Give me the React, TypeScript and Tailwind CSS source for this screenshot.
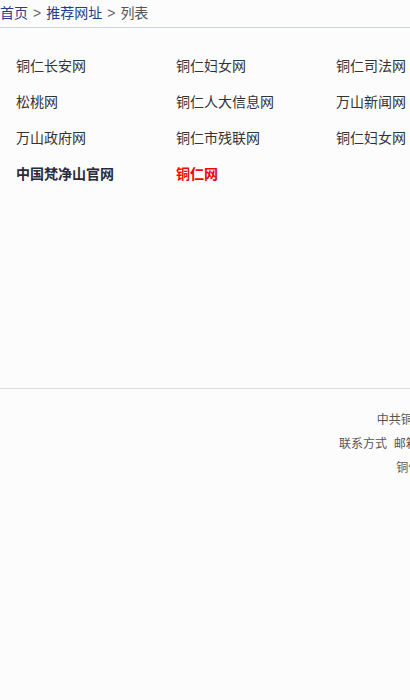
import React from 'react';

interface SiteLink {
    name: string;
    tone?: 'bold' | 'red';
}

const links: SiteLink[] = [
    { name: '铜仁长安网' },
    { name: '铜仁妇女网' },
    { name: '铜仁司法网' },
    { name: '松桃网' },
    { name: '铜仁人大信息网' },
    { name: '万山新闻网' },
    { name: '万山政府网' },
    { name: '铜仁市残联网' },
    { name: '铜仁妇女网' },
    { name: '中国梵净山官网', tone: 'bold' },
    { name: '铜仁网', tone: 'red' },
];

const font = 'font-["Liberation_Sans","Noto_Sans_CJK_SC",sans-serif]';

const toneClass = (tone?: SiteLink['tone']) => {
    if (tone === 'bold') return 'font-bold text-[#2a2a3a]';
    if (tone === 'red') return 'font-bold text-[#ff0000]';
    return 'text-[#333333]';
};

export default function App() {
    return (
        <div className={`${font} w-full min-h-[700px] bg-[#fcfcfc] overflow-hidden`}>
            {/* breadcrumb */}
            <div className="h-[28px] leading-[27px] text-[14px] border-b border-[#cdd5e0] whitespace-nowrap">
                <a className="text-[#1d3f8f]">首页</a>
                <span className="text-[#666666] mx-[5px]">&gt;</span>
                <a className="text-[#1d3f8f]">推荐网址</a>
                <span className="text-[#666666] mx-[5px]">&gt;</span>
                <span className="text-[#555555]">列表</span>
            </div>

            {/* link list */}
            <div className="h-[360px] pt-[20px] pl-[16px]">
                <ul className="grid grid-cols-[160px_160px_160px] w-[480px]">
                    {links.map((link, i) => (
                        <li
                            key={i}
                            className={`h-[36px] leading-[36px] text-[14px] whitespace-nowrap ${toneClass(link.tone)}`}
                        >
                            <a>{link.name}</a>
                        </li>
                    ))}
                </ul>
            </div>

            <div className="border-t border-[#dddddd] pt-[19px] pb-[20px]">
                <div className="w-[1000px] text-center text-[12px] leading-[24px] text-[#555555] whitespace-pre">
                    <p>中共铜仁市委宣传部  铜仁市互联网信息中心办</p>
                    <p>联系方式  邮箱　地址：贵州省铜仁市碧江区金滩大道一号 附</p>
                    <p>铜仁市委宣传部主办铜仁信息中心承办 </p>
                </div>
            </div>
        </div>
    );
}
